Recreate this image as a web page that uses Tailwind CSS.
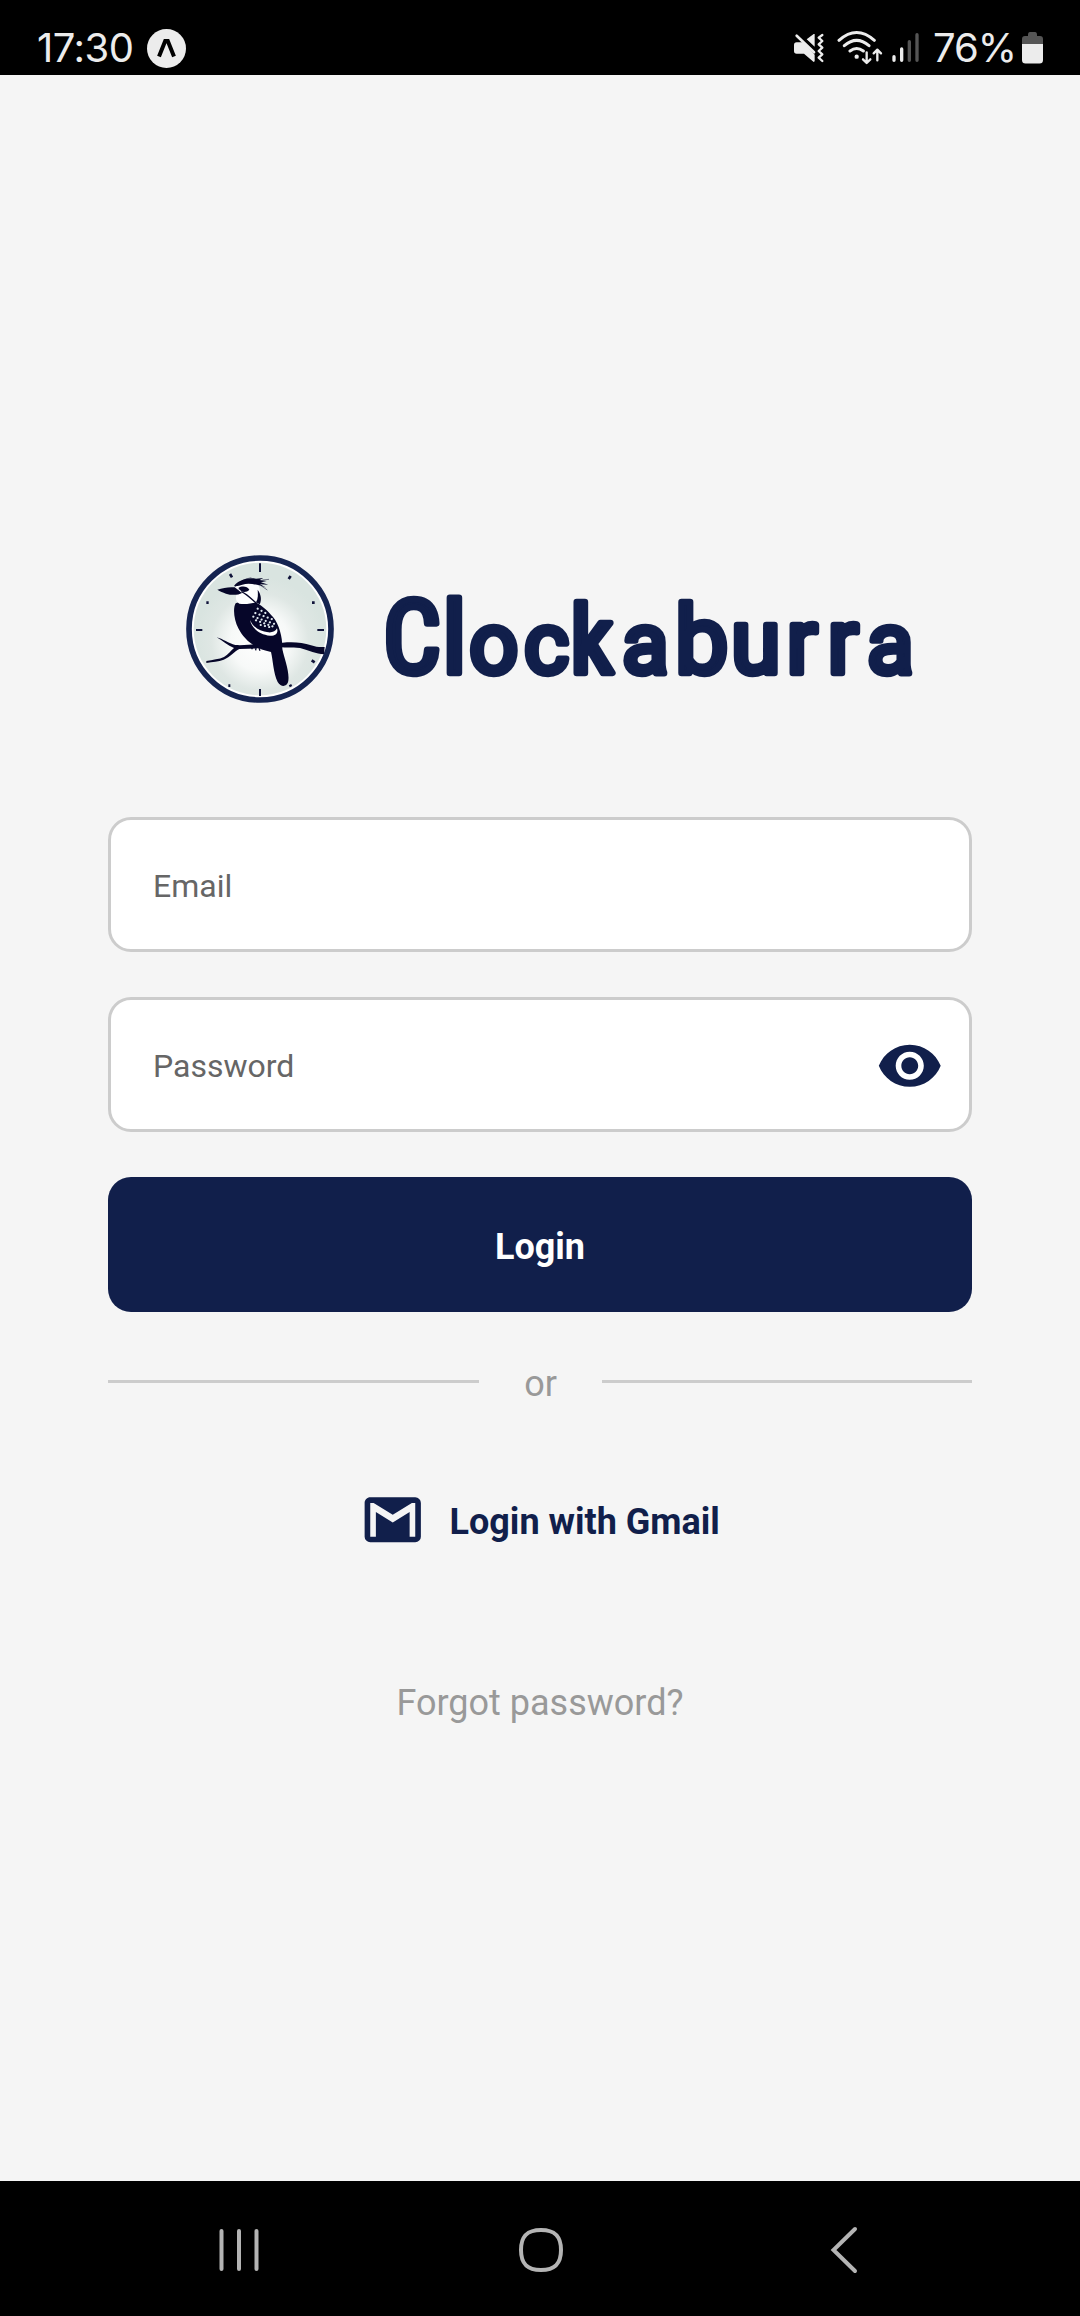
<!DOCTYPE html>
<html lang="en">
<head>
<meta charset="utf-8">
<title>Clockaburra</title>
<script src="https://cdn.jsdelivr.net/npm/@tailwindcss/browser@4"></script>
</head>
<body class="w-[1080px] h-[2316px] flex flex-col bg-[#f5f5f5] font-[Roboto,sans-serif] overflow-hidden">
<header class="h-[75px] bg-black text-[#ececec] flex items-start shrink-0">
  <div class="pl-[37px] pt-[24px] font-[Inter,sans-serif] text-[40px] leading-[48px] tracking-[-0.5px] w-[147px] whitespace-nowrap">17:30</div>
  <svg class="mt-[29px]" width="39" height="39" viewBox="0 0 39 39"><circle cx="19.5" cy="19.5" r="19.5" fill="#ececec"/><path d="M12 27.500 18.200 12H20.800L27 27.500" fill="none" stroke="#000" stroke-width="4"/></svg>
  <svg class="ml-[604px] mt-[25px]" width="130" height="40" viewBox="90 75 390 120" fill="none" stroke="#ececec" stroke-linecap="round" stroke-linejoin="round">
    <path d="M110 127H130L164 164V184L161 186L132 161H110Q102 161 102 153V135Q102 127 110 127ZM164 102V140L140 118L161 102Z" fill="#ececec" stroke="none"/>
    <path d="M118 104 168 152" stroke="#000" stroke-width="7"/><path d="M110 107 162 157" stroke-width="8"/>
    <path d="M187 105 176 113 187 123 176 133 187 143 176 153 187 163 176 173 187 183" stroke-width="7"/>
    <path d="M237 121Q290 74 343 121M253 137Q290 105 327 137M270 153Q290 138 310 153" stroke-width="9"/>
    <circle cx="290" cy="170" r="6.5" fill="#ececec" stroke="none"/>
    <path d="M320 157V188M309 178 320 189 331 178M352 181V150M341 160 352 149 363 160" stroke-width="7"/>
    <path d="M402 170V181M425 147V181" stroke-width="10"/><path d="M448 125V181M471 104V181" stroke="#555" stroke-width="10"/>
  </svg>
  <div class="ml-[13px] pt-[24px] w-[89px] font-[Inter,sans-serif] text-[40px] leading-[48px] tracking-[-1px]">76%</div>
  <svg class="mt-[32px]" width="21" height="32" viewBox="0 0 21 32"><path d="M6 3Q6 0 8 0H13Q15 0 15 3V4H18Q21 4 21 7V12H0V7Q0 4 3 4H6Z" fill="#555"/><path d="M0 12H21V28Q21 31.500 17.500 31.500H3.500Q0 31.500 0 28Z" fill="#ececec"/></svg>
</header>

<main class="flex-1 flex flex-col pt-[470px]">
  <div class="flex pl-[176px]">
    <svg class="shrink-0" width="170" height="170" viewBox="0 0 510 510">
      <defs>
        <radialGradient id="face" cx="252" cy="290" r="195" gradientUnits="userSpaceOnUse"><stop offset="0" stop-color="#fff"/><stop offset=".45" stop-color="#f7f9f8"/><stop offset=".75" stop-color="#dfe7e4"/><stop offset="1" stop-color="#d9e4e0"/></radialGradient>
      </defs>
      <circle cx="252" cy="252" r="213" fill="#fff" stroke="#152451" stroke-width="17"/>
      <circle cx="252" cy="252" r="199" fill="url(#face)"/>
      <g stroke="#10133a" stroke-width="6">
        <path d="M252 55V81M252 432V453M60 255H79M424 255H444"/>
        <path d="M162 87 168 97M344 93 338 102M91 173H98M408 173H416M407 346 416 352M157 422H163M342 419 345 425" stroke-width="8"/>
      </g>
      <g fill="#060629">
        <path d="M122 277 C140 281 158 296 178 300 C210 302 225 296 250 298 L320 293 C350 290 380 292 405 301 C420 306 432 307 446 306 L444 328 C420 326 400 317 372 309 C345 306 330 308 312 307 L245 310 L190 312 C175 318 163 337 143 344 C127 350 110 350 91 354 L91 348 C110 344 130 343 144 336 C156 330 164 317 174 309 C155 301 140 288 122 277Z"/>
        <path d="M179 175 C170 190 174 225 187 250 C203 282 235 312 285 321 C291 345 292 385 305 411 C315 427 331 426 336 412 C343 385 325 341 319 312 C320 280 311 240 291 216 C270 190 240 167 214 163Z"/>
      </g>
      <path d="M176 128 C190 112 215 104 238 111 C249 118 254 132 251 150 L241 172 C225 174 210 180 190 176 C180 172 178 160 181 150Z" fill="#fdfefe"/>
      <g fill="#060629">
        <path d="M124 134 C142 128 160 125 176 127 C184 132 192 140 198 144 C186 151 166 151 150 146 C140 142 133 139 124 134Z"/>
        <path d="M174 123 C186 106 214 96 240 101 L262 99 L251 105 L272 108 L255 112 L277 119 L252 118 L271 128 C245 119 220 113 199 119 C190 121 183 125 174 123Z"/>
        <path d="M187 129 C198 122 214 124 220 134 C213 142 202 142 195 138Z"/>
        <path d="M245 134 C255 148 258 164 251 178 L240 172 C247 160 246 148 245 134Z"/>
      </g>
      <path d="M196 140 C215 149 226 162 242 176" fill="none" stroke="#060629" stroke-width="4"/>
      <path d="M178 125 C187 111 207 102 226 98M255 122 274 135M259 105 279 103M188 133 205 130" fill="none" stroke="#060629" stroke-width="1.500"/>
      <path d="M222 225 C232 249 253 258 277 262 C290 263 299 258 303 250 C308 264 298 273 282 272 C253 269 228 252 222 225Z" fill="#fff"/>
      <g fill="none" stroke="#dfe8ef" stroke-width="6.500" stroke-linecap="round" stroke-dasharray=".1 13">
        <path d="M245 191 276 208M238 204 292 224M232 215 299 238M240 226 300 248M254 240 292 249"/>
      </g>
      <path d="M230 306 227 313M240 308 239 316M249 309 252 317" stroke="#060629" stroke-width="4"/>
    </svg>
    <svg class="shrink-0" width="600" height="170" viewBox="346 545 600 170" role="img" aria-label="Clockaburra">
      <text class="font-[Roboto,sans-serif]" fill="#111f4b" stroke="#111f4b" stroke-width="6.500" stroke-linejoin="round" font-size="86" y="672.500" x="383 442.300 469.300 524 570.500 622 675 731 786.500 827.500 867"><tspan class="[font-stretch:75%]" font-size="102">C</tspan><tspan font-size="100">l</tspan>o<tspan class="[font-stretch:88%]">c</tspan><tspan class="[font-stretch:85%]" font-size="95">k</tspan>a<tspan class="[font-stretch:88%]" font-size="95">b</tspan><tspan font-size="90">u</tspan><tspan font-size="91">rr</tspan>a</text>
    </svg>
  </div>

  <div class="mt-[102px] px-[108px] flex flex-col gap-[45px]">
    <div class="h-[135px] rounded-[23px] border-[3px] border-[#ccc] bg-white flex items-center pl-[42px] text-[32px] text-[#666]"><span class="pt-[2px]">Email</span></div>
    <div class="h-[135px] rounded-[23px] border-[3px] border-[#ccc] bg-white flex items-center justify-between pl-[42px] pr-[26px] text-[32px] text-[#666]"><span class="pt-[2px]">Password</span>
      <svg class="mt-[2px]" width="67.500" height="67.500" viewBox="0 0 24 24" fill="#111f4b"><path d="M12 4.500C7 4.500 2.730 7.610 1 12c1.730 4.390 6 7.500 11 7.500s9.270-3.110 11-7.500c-1.730-4.390-6-7.500-11-7.500zM12 17c-2.760 0-5-2.240-5-5s2.240-5 5-5 5 2.240 5 5-2.240 5-5 5zm0-8c-1.660 0-3 1.340-3 3s1.340 3 3 3 3-1.340 3-3-1.340-3-3-3z"/></svg>
    </div>
    <div class="h-[135px] rounded-[23px] bg-[#111f4b] flex items-center justify-center text-white font-bold text-[36px]"><span class="pt-[4px]">Login</span></div>
  </div>

  <div class="mt-[48px] h-[43px] px-[108px] flex items-center text-[36px] leading-[42px] text-[#999]">
    <div class="h-[3px] w-[371px] bg-[#ccc]"></div>
    <span class="flex-1 text-center pt-[4px]">or</span>
    <div class="h-[3px] w-[370px] bg-[#ccc]"></div>
  </div>

  <div class="mt-[83px] h-[68px] pl-[359px] flex items-center gap-[23px] text-[36px] font-bold text-[#111f4b]">
    <svg width="67.500" height="67.500" viewBox="0 0 24 24" fill="#111f4b"><path d="M20 18h-2V9.250L12 13 6 9.250V18H4V6h1.200l6.800 4.250L18.800 6H20m0-2H4c-1.110 0-2 .89-2 2v12a2 2 0 0 0 2 2h16a2 2 0 0 0 2-2V6a2 2 0 0 0-2-2z"/></svg>
    <span class="pt-[4px]">Login with Gmail</span>
  </div>

  <div class="mt-[128px] text-center text-[36px] leading-[42px] text-[#999]">Forgot password?</div>
</main>

<nav class="h-[135px] bg-black shrink-0 flex items-center justify-between pl-[215px] pr-[213px] pt-[3px]">
  <svg width="48" height="48" viewBox="0 0 48 48" stroke="#b4b4b4" stroke-width="4" stroke-linecap="round"><path d="M6.500 5V43M24 5V43M41.500 5V43"/></svg>
  <svg width="48" height="48" viewBox="0 0 48 48" fill="none" stroke="#b4b4b4" stroke-width="4"><path d="M24 4C38 4 44 10 44 24S38 44 24 44 4 38 4 24 10 4 24 4Z"/></svg>
  <svg width="48" height="48" viewBox="0 0 48 48" fill="none" stroke="#b4b4b4" stroke-width="4" stroke-linecap="round"><path d="M36 3 14.500 24 36 45"/></svg>
</nav>
</body>
</html>
